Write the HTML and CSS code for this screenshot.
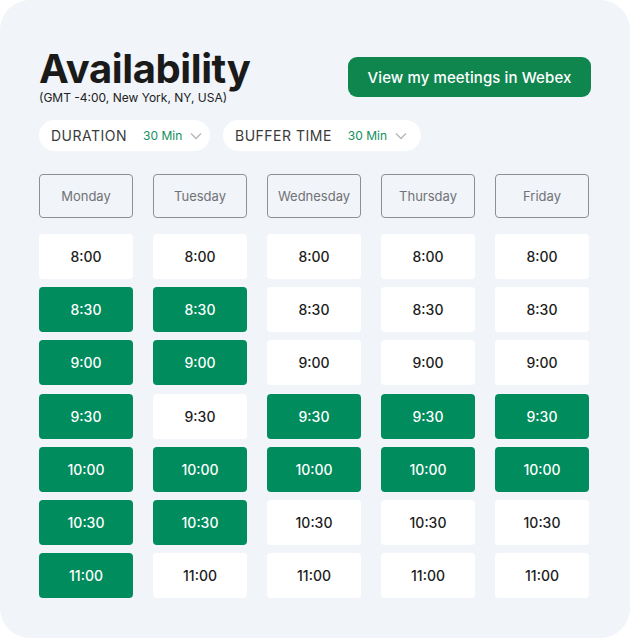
FILE: index.html
```html
<!DOCTYPE html>
<html>
<head>
<meta charset="utf-8">
<link rel="stylesheet" href="styles.css">
</head>
<body>
<div class="card">
  <div class="header">
    <div class="titles">
      <h1 class="title">Availability</h1>
      <div class="tz">(GMT -4:00, New York, NY, USA)</div>
    </div>
    <button class="webex">View my meetings in Webex</button>
  </div>
  <div class="filters">
    <div class="pill pill-dur"><span class="label">DURATION</span><span class="val">30 Min</span><svg class="chev" width="12" height="8" viewBox="0 0 12 8"><path d="M1 1.5 L6 6.5 L11 1.5" fill="none" stroke="#b5b8bc" stroke-width="1.4"/></svg></div>
    <div class="pill pill-buf"><span class="label">BUFFER TIME</span><span class="val">30 Min</span><svg class="chev" width="12" height="8" viewBox="0 0 12 8"><path d="M1 1.5 L6 6.5 L11 1.5" fill="none" stroke="#b5b8bc" stroke-width="1.4"/></svg></div>
  </div>
  <div class="days">
    <div class="day">Monday</div>
    <div class="day">Tuesday</div>
    <div class="day">Wednesday</div>
    <div class="day">Thursday</div>
    <div class="day">Friday</div>
  </div>
  <div class="grid">
    <div class="slot">8:00</div><div class="slot">8:00</div><div class="slot">8:00</div><div class="slot">8:00</div><div class="slot">8:00</div>
    <div class="slot on">8:30</div><div class="slot on">8:30</div><div class="slot">8:30</div><div class="slot">8:30</div><div class="slot">8:30</div>
    <div class="slot on">9:00</div><div class="slot on">9:00</div><div class="slot">9:00</div><div class="slot">9:00</div><div class="slot">9:00</div>
    <div class="slot on">9:30</div><div class="slot">9:30</div><div class="slot on">9:30</div><div class="slot on">9:30</div><div class="slot on">9:30</div>
    <div class="slot on">10:00</div><div class="slot on">10:00</div><div class="slot on">10:00</div><div class="slot on">10:00</div><div class="slot on">10:00</div>
    <div class="slot on">10:30</div><div class="slot on">10:30</div><div class="slot">10:30</div><div class="slot">10:30</div><div class="slot">10:30</div>
    <div class="slot on">11:00</div><div class="slot">11:00</div><div class="slot">11:00</div><div class="slot">11:00</div><div class="slot">11:00</div>
  </div>
</div>
</body>
</html>
```
FILE: styles.css
```css
* { box-sizing: border-box; }
html, body { margin: 0; padding: 0; background: #ffffff; }
body { font-family: Inter, "Noto Sans", sans-serif; }
.card {
  width: 630px;
  height: 638px;
  background: #f1f4f8;
  border-radius: 30px;
  padding: 48px 39px 0 39px;
}
.header {
  display: flex;
  justify-content: space-between;
  align-items: flex-start;
}
.title {
  margin: 0;
  font-size: 40px;
  font-weight: 700;
  line-height: 42px;
  color: #1a1a1a;
  letter-spacing: -0.4px;
}
.tz {
  font-size: 12px;
  line-height: 14px;
  color: #222;
  margin-top: 1px;
}
.webex {
  margin-top: 9px;
  width: 243px;
  height: 40px;
  border: none;
  border-radius: 9px;
  background: #10864f;
  color: #fff;
  font-family: Inter, "Noto Sans", sans-serif;
  font-size: 15px;
  font-weight: 500;
  letter-spacing: 0.1px;
  padding: 0;
}
.filters {
  display: flex;
  gap: 13px;
  margin-top: 15px;
}
.pill {
  display: flex;
  align-items: center;
  height: 31px;
  background: #fff;
  border-radius: 16px;
  padding: 0 0 0 12px;
}
.pill-dur { width: 171px; }
.pill-buf { width: 198px; }
.label {
  font-size: 14px;
  letter-spacing: 0.5px;
  color: #3a3a3a;
}
.val {
  font-size: 12px;
  color: #10905c;
  margin-left: 16px;
}
.chev { margin-left: 8px; }
.days {
  display: grid;
  grid-template-columns: repeat(5, 94px);
  column-gap: 20px;
  margin-top: 23px;
  height: 44px;
}
.day {
  border: 1px solid #8c8f93;
  border-radius: 4px;
  display: flex;
  align-items: center;
  justify-content: center;
  font-size: 13px;
  color: #707377;
}
.grid {
  display: grid;
  grid-template-columns: repeat(5, 94px);
  grid-template-rows: repeat(7, 45px);
  column-gap: 20px;
  row-gap: 8.2px;
  margin-top: 16px;
}
.slot {
  background: #fff;
  border-radius: 4px;
  display: flex;
  align-items: center;
  justify-content: center;
  font-size: 14px;
  font-weight: 500;
  color: #1c1c1c;
}
.slot.on {
  background: #008c5c;
  color: #fff;
}
```
